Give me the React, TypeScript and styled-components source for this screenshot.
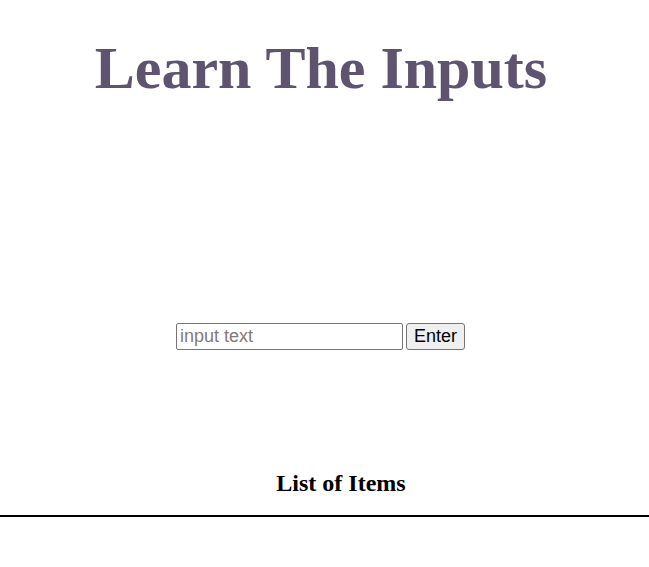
import React, { useState } from "react";
import styled, { createGlobalStyle } from "styled-components";

const GlobalStyle = createGlobalStyle`
  html, body { margin: 0; padding: 0; background: #ffffff; }
  body { font-family: "Liberation Serif", "Times New Roman", serif; }
`;

const Page = styled.main`
  display: flex;
  flex-direction: column;
  align-items: center;
  width: 100%;
`;

const Title = styled.h1`
  margin: 34px 0 0;
  padding-right: 7px;
  font-family: "Liberation Serif", "Times New Roman", serif;
  font-size: 60px;
  font-weight: 700;
  line-height: 69px;
  color: #5f5470;
`;

const Form = styled.form`
  display: flex;
  align-items: center;
  gap: 3px;
  margin-top: 220px;
  padding-right: 8px;
`;

const TextInput = styled.input`
  box-sizing: border-box;
  width: 227px;
  height: 27px;
  padding: 1px 3px;
  font-family: "Liberation Sans", Arial, sans-serif;
  font-size: 18px;
  color: #000;
  border: 1px solid #767676;
  border-radius: 2px;
  background: #fff;
  &::placeholder { color: #85797a; }
`;

const Button = styled.button`
  box-sizing: border-box;
  height: 27px;
  padding: 1px 7px;
  font-family: "Liberation Sans", Arial, sans-serif;
  font-size: 18px;
  color: #000;
  background: #efefef;
  border: 1px solid #767676;
  border-radius: 3px;
`;

const ListSection = styled.section`
  align-self: stretch;
  display: flex;
  flex-direction: column;
  align-items: center;
  margin-top: 119px;
`;

const ListHeading = styled.h2`
  margin: 0;
  padding-left: 33px;
  font-family: "Liberation Serif", "Times New Roman", serif;
  font-size: 24px;
  font-weight: 700;
  line-height: 28px;
  color: #000;
`;

const Rule = styled.hr`
  align-self: stretch;
  margin: 18px 0 0;
  height: 0;
  border: none;
  border-top: 2px solid #000;
`;

export default function App() {
  const [value, setValue] = useState("");
  return (
    <>
      <GlobalStyle />
      <Page>
        <Title>Learn The Inputs</Title>
        <Form onSubmit={(e) => e.preventDefault()}>
          <TextInput
            placeholder="input text"
            value={value}
            onChange={(e) => setValue(e.target.value)}
          />
          <Button type="submit">Enter</Button>
        </Form>
        <ListSection>
          <ListHeading>List of Items</ListHeading>
          <Rule />
        </ListSection>
      </Page>
    </>
  );
}
